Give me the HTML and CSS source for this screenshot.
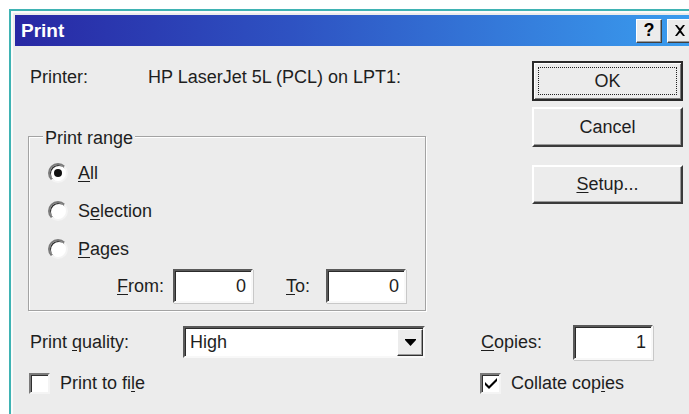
FILE: index.html
```html
<!DOCTYPE html>
<html lang="en">
<head>
<meta charset="utf-8">
<title>Print</title>
<link rel="stylesheet" href="styles.css">
</head>
<body>
<div class="window">
  <div class="titlebar">
    <span class="title">Print</span>
    <div class="title-buttons">
      <button class="tbtn help" type="button">?</button>
      <button class="tbtn close" type="button" aria-label="Close">
        <svg width="12" height="11" viewBox="0 0 12 11"><path d="M1 0h2l3 3.5L9 0h2L7 5.5 11 11H9L6 7.5 3 11H1l4-5.5z" fill="#000"/></svg>
      </button>
    </div>
  </div>

  <div class="client">
    <div class="top">
      <div class="main">
        <div class="printer-row">
          <span class="printer-label">Printer:</span>
          <span class="printer-name">HP LaserJet 5L (PCL) on LPT1:</span>
        </div>

        <div class="group">
          <span class="group-label">Print range</span>
          <div class="radio-row"><span class="radio checked"></span><span class="rlabel"><u>A</u>ll</span></div>
          <div class="radio-row"><span class="radio"></span><span class="rlabel">S<u>e</u>lection</span></div>
          <div class="radio-row"><span class="radio"></span><span class="rlabel"><u>P</u>ages</span></div>
          <div class="range-row">
            <span class="from-label"><u>F</u>rom:</span>
            <span class="field range-field">0</span>
            <span class="to-label"><u>T</u>o:</span>
            <span class="field range-field">0</span>
          </div>
        </div>
      </div>

      <div class="actions">
        <button class="btn default" type="button"><span class="focus">OK</span></button>
        <button class="btn" type="button">Cancel</button>
        <button class="btn setup" type="button"><u>S</u>etup...</button>
      </div>
    </div>

    <div class="row quality-row">
      <div class="left-part">
        <span class="quality-label">Print <u>q</u>uality:</span>
        <div class="combo">
          <span class="combo-text">High</span>
          <span class="combo-btn"><svg width="11" height="7" viewBox="0 0 11 7"><path d="M0 0h11v1L5.5 7 0 1z" fill="#000"/></svg></span>
        </div>
      </div>
      <div class="right-part">
        <span class="copies-label"><u>C</u>opies:</span>
        <span class="field copies-field">1</span>
      </div>
    </div>

    <div class="row check-row">
      <div class="left-part">
        <span class="check"></span>
        <span class="clabel">Print to fi<u>l</u>e</span>
      </div>
      <div class="right-part">
        <span class="check">
          <svg width="14" height="12" viewBox="0 0 14 12"><path d="M1 5l4 4 8-8v3l-8 8-4-4z" fill="#000"/></svg>
        </span>
        <span class="clabel">Collate cop<u>i</u>es</span>
      </div>
    </div>
  </div>
</div>
</body>
</html>
```

FILE: styles.css
```css
html, body {
  margin: 0;
  padding: 0;
  background: #ffffff;
  overflow: hidden;
  width: 689px;
  height: 414px;
}

body {
  font-family: "Liberation Sans", Arial, sans-serif;
  font-size: 18px;
  color: #1e1e1e;
}

u {
  text-decoration: underline;
  text-underline-offset: 2px;
}

/* window frame */
.window {
  box-sizing: border-box;
  margin: 9px 0 0 9px;
  width: 694px;
  height: 420px;
  border-top: 2px solid #3fb3b3;
  border-left: 2px solid #3fb3b3;
  padding: 4px 0 0 4px;
  background: #ececec;
  box-shadow: inset 2px 2px 0 #fbfbfb;
}

.titlebar {
  height: 31px;
  display: flex;
  align-items: center;
  justify-content: space-between;
  padding-left: 6px;
  background: linear-gradient(to right, #2828a4 0%, #2e52c2 40%, #3a9ff0 100%);
}

.title {
  color: #ffffff;
  font-weight: bold;
  font-size: 19px;
  line-height: 31px;
}

.title-buttons {
  display: flex;
  gap: 5px;
  padding-right: 10px;
}

.tbtn {
  box-sizing: border-box;
  width: 26px;
  height: 24px;
  padding: 0;
  margin: 0;
  display: flex;
  align-items: center;
  justify-content: center;
  background: #ececec;
  border: 1px solid;
  border-color: #ffffff #404040 #404040 #ffffff;
  box-shadow: inset -1px -1px 0 #9a9a9a;
  font-family: "Liberation Sans", Arial, sans-serif;
  font-weight: bold;
  font-size: 18px;
  color: #000;
}

/* dialog body */
.client {
  padding: 15px 0 0 13px;
}

.top {
  display: flex;
  align-items: flex-start;
}

.main {
  width: 398px;
}

.printer-row {
  display: flex;
  height: 20px;
  line-height: 20px;
  margin-top: 6px;
  padding-left: 2px;
}

.printer-label {
  width: 118px;
}

.group {
  position: relative;
  box-sizing: border-box;
  margin-top: 49px;
  height: 175px;
  border: 1px solid #a3a3a3;
  box-shadow: inset 1px 1px 0 #ffffff, 1px 1px 0 #ffffff;
  padding: 17px 0 0 19px;
}

.group-label {
  position: absolute;
  top: -9px;
  left: 14px;
  padding: 0 2px;
  line-height: 20px;
  background: #ececec;
}

.radio-row {
  display: flex;
  align-items: center;
  height: 38px;
}

.radio {
  box-sizing: border-box;
  width: 20px;
  height: 20px;
  border-radius: 50%;
  background: #ffffff;
  border: 2px solid;
  border-color: #7a7a7a #f4f4f4 #f4f4f4 #7a7a7a;
  box-shadow: inset 1px 1px 0 #303030;
  display: flex;
  align-items: center;
  justify-content: center;
  margin-right: 10px;
}

.radio.checked::after {
  content: "";
  width: 8px;
  height: 8px;
  border-radius: 50%;
  background: #111;
}

.range-row {
  display: flex;
  align-items: center;
  height: 34px;
  margin-top: 1px;
  padding-left: 69px;
}

.from-label {
  width: 56px;
}

.to-label {
  width: 40px;
  margin-left: 33px;
}

.field {
  box-sizing: border-box;
  display: block;
  background: #ffffff;
  border: 2px solid;
  border-color: #5a5a5a #f8f8f8 #f8f8f8 #5a5a5a;
  box-shadow: inset 1px 1px 0 #2a2a2a, 1px 1px 0 #c8c8c8;
  text-align: right;
  padding-right: 5px;
}

.range-field {
  width: 80px;
  height: 34px;
  line-height: 30px;
}

/* command buttons */
.actions {
  display: flex;
  flex-direction: column;
  width: 151px;
  margin-left: 106px;
}

.btn {
  box-sizing: border-box;
  height: 40px;
  margin: 0 0 6px 0;
  padding: 0;
  background: #ececec;
  border: 2px solid;
  border-color: #ffffff #3a3a3a #3a3a3a #ffffff;
  box-shadow: inset -1px -1px 0 #9a9a9a;
  font-family: "Liberation Sans", Arial, sans-serif;
  font-size: 18px;
  color: #1e1e1e;
}

.btn.default {
  border: 2px solid #2a2a2a;
  box-shadow: inset 1px 1px 0 #ffffff, inset -1px -1px 0 #7a7a7a;
  padding: 4px;
}

.btn .focus {
  display: flex;
  align-items: center;
  justify-content: center;
  height: 100%;
  box-sizing: border-box;
  outline: 1px dotted #222;
  outline-offset: -1px;
}

.btn.setup {
  margin-top: 12px;
  height: 39px;
}

/* lower rows */
.row {
  display: flex;
  align-items: center;
}

.left-part {
  display: flex;
  align-items: center;
  width: 452px;
}

.right-part {
  display: flex;
  align-items: center;
}

.quality-row {
  height: 36px;
  margin-top: 13px;
}

.quality-label {
  width: 153px;
  padding-left: 2px;
}

.combo {
  box-sizing: border-box;
  width: 242px;
  height: 32px;
  display: flex;
  align-items: center;
  justify-content: space-between;
  background: #ffffff;
  border: 2px solid;
  border-color: #5a5a5a #f8f8f8 #f8f8f8 #5a5a5a;
  box-shadow: inset 1px 1px 0 #2a2a2a;
  padding: 1px 0 0 5px;
}

.combo-btn {
  box-sizing: border-box;
  width: 26px;
  height: 27px;
  display: flex;
  align-items: center;
  justify-content: center;
  background: #ececec;
  border: 1px solid;
  border-color: #ffffff #303030 #303030 #ffffff;
  box-shadow: inset -1px -1px 0 #9a9a9a;
  align-self: flex-end;
}

.copies-label {
  width: 92px;
  padding-left: 1px;
}

.copies-field {
  width: 80px;
  height: 35px;
  line-height: 31px;
}

.check-row {
  height: 22px;
  margin-top: 12px;
}

.check {
  box-sizing: border-box;
  width: 21px;
  height: 21px;
  background: #ffffff;
  border: 2px solid;
  border-color: #7a7a7a #f4f4f4 #f4f4f4 #7a7a7a;
  box-shadow: inset 1px 1px 0 #303030;
  display: flex;
  align-items: center;
  justify-content: center;
  margin-right: 10px;
}

.left-part .check {
  margin-left: 1px;
}
```
